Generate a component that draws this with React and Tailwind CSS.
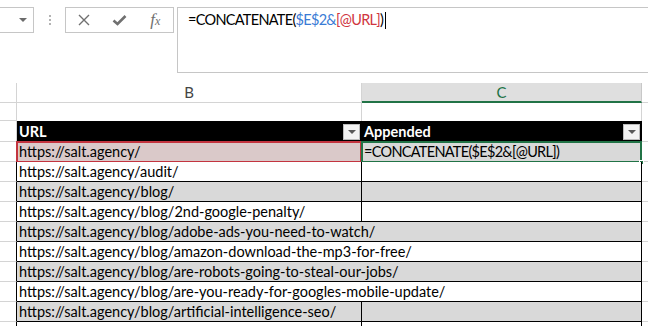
import React from "react";

const rows = [
  { url: "https://salt.agency/", selected: true },
  { url: "https://salt.agency/audit/" },
  { url: "https://salt.agency/blog/" },
  { url: "https://salt.agency/blog/2nd-google-penalty/" },
  { url: "https://salt.agency/blog/adobe-ads-you-need-to-watch/", spill: true },
  { url: "https://salt.agency/blog/amazon-download-the-mp3-for-free/", spill: true },
  { url: "https://salt.agency/blog/are-robots-going-to-steal-our-jobs/", spill: true },
  { url: "https://salt.agency/blog/are-you-ready-for-googles-mobile-update/", spill: true },
  { url: "https://salt.agency/blog/artificial-intelligence-seo/" },
  { url: "" },
];

function FilterButton() {
  return (
    <div className="w-[17px] h-[16px] bg-[#f3f3f3] border border-[#bdbdbd] flex items-center justify-center">
      <div className="w-0 h-0 border-l-[4px] border-r-[4px] border-t-[4px] border-l-transparent border-r-transparent border-t-[#595959]" />
    </div>
  );
}

export default function App() {
  return (
    <div className="w-[648px] h-[326px] overflow-hidden bg-white text-black font-[Lato,sans-serif] text-[14.5px] leading-[19px]">
      {/* formula bar */}
      <div className="h-[83px] pt-[7px] flex items-start">
        <div className="w-[34px] h-[26px] border border-l-0 border-[#c6c6c6] flex items-center justify-end pr-[6px]">
          <div className="w-0 h-0 border-l-[4px] border-r-[4px] border-t-[4px] border-l-transparent border-r-transparent border-t-[#6b6b6b]" />
        </div>
        <div className="w-[31px] h-[26px] flex flex-col items-center justify-center gap-[2px]">
          <div className="w-[2px] h-[2px] bg-[#b3b3b3]" />
          <div className="w-[2px] h-[2px] bg-[#b3b3b3]" />
          <div className="w-[2px] h-[2px] bg-[#b3b3b3]" />
        </div>
        <div className="w-[109px] h-[26px] border border-[#c6c6c6] flex items-center">
          <div className="w-[36px] flex justify-center">
            <svg width="12" height="12" viewBox="0 0 12 12">
              <path d="M1 1L11 11M11 1L1 11" stroke="#707070" strokeWidth="1.4" />
            </svg>
          </div>
          <div className="w-[36px] flex justify-center">
            <svg width="15" height="12" viewBox="0 0 15 12">
              <path d="M1.5 6.5L5.5 10L13.5 2" stroke="#707070" strokeWidth="2.6" fill="none" />
            </svg>
          </div>
          <div className="w-[36px] flex justify-center items-baseline font-['Liberation_Serif',serif] italic text-[17px] leading-[20px] text-[#707070]">
            f<span className="text-[12px]">x</span>
          </div>
        </div>
        <div className="ml-[3px] flex-1 h-[66px] border border-r-0 border-[#c6c6c6] pl-[10px] pt-[2px] flex items-start">
          <span className="whitespace-nowrap leading-[20px] tracking-[-0.7px]">
            =CONCATENATE(
            <span className="text-[#3a7bd5]">$E$2&amp;</span>
            <span className="text-[#d0363f]">[@URL]</span>)
          </span>
          <span className="w-[1px] h-[17px] bg-black mt-[2px] ml-[2px]" />
        </div>
      </div>

      {/* column headers */}
      <div className="flex h-[20px]">
        <div className="w-[17px] h-full border-r border-b border-[#d4d4d4]" />
        <div className="w-[345px] h-full border-r border-b border-[#d4d4d4] flex items-center justify-center text-[15px] text-[#444]">B</div>
        <div className="w-[280px] h-full bg-[#dfdfdf] border-r border-[#c8c8c8] border-b-2 border-b-[#217346] flex items-center justify-center text-[15px] text-[#217346]">C</div>
        <div className="w-[6px] h-full border-b border-[#d4d4d4]" />
      </div>

      {/* empty row */}
      <div className="flex h-[18px]">
        <div className="w-[17px] h-full border-r border-b border-[#d4d4d4]" />
        <div className="w-[345px] h-full border-r border-[#d4d4d4]" />
        <div className="w-[280px] h-full border-r border-[#d4d4d4]" />
        <div className="w-[6px] h-full" />
      </div>

      {/* table header */}
      <div className="flex h-[21px]">
        <div className="w-[17px] h-full border-r border-b border-[#d4d4d4]" />
        <div className="w-[345px] h-full bg-black flex items-center justify-between pl-[2px] pr-[2px] text-white font-bold">
          <span>URL</span>
          <FilterButton />
        </div>
        <div className="w-[280px] h-full bg-black border-r border-black flex items-center justify-between pl-[2px] pr-[1px] text-white font-bold">
          <span>Appended</span>
          <FilterButton />
        </div>
        <div className="w-[6px] h-full border-b border-[#d4d4d4]" />
      </div>

      {/* data rows */}
      {rows.map((r, i) => {
        const band = i % 2 === 0 ? "bg-[#d9d9d9]" : "bg-white";
        return (
          <div key={i} className="flex h-[20px] relative">
            <div className="w-[17px] h-full border-r border-b border-[#d4d4d4] border-r-black" />
            {r.spill ? (
              <div className={`w-[625px] h-full border-r border-b border-black ${band} pl-[2px] flex items-center whitespace-nowrap`}>
                {r.url}
              </div>
            ) : (
              <>
                <div className={`w-[345px] h-full border-r border-b border-black pl-[2px] flex items-center whitespace-nowrap ${r.selected ? "bg-[#dac9c9]" : band}`}>
                  {r.url}
                </div>
                <div className={`w-[280px] h-full border-r border-b border-black pl-[2px] flex items-center whitespace-nowrap ${band}`}>
                  {r.selected ? <span className="tracking-[-0.7px]">=CONCATENATE($E$2&amp;[@URL])</span> : null}
                </div>
              </>
            )}
            <div className="w-[6px] h-full border-b border-[#d4d4d4]" />
            {r.selected && (
              <>
                <div className="absolute left-[16px] top-[-1px] w-[346px] h-[22px] border-2 border-[#c3343f]" />
                <div className="absolute left-[361px] top-[-1px] w-[281px] h-[22px] border-2 border-[#217346]" />
                <div className="absolute left-[639px] top-[18px] w-[5px] h-[5px] bg-[#217346] border border-white" />
              </>
            )}
          </div>
        );
      })}
    </div>
  );
}
